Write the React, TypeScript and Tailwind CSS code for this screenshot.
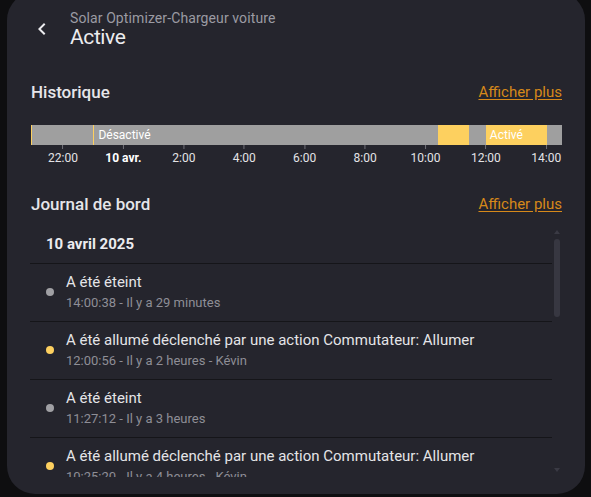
const START = -1.06; // hours relative to 22:00
const END = 16.52;
const SPAN = END - START;

const segments = [
  { from: -1.06, to: -1.02, on: true },
  { from: -1.02, to: 1.0, on: false },
  { from: 1.0, to: 1.04, on: true },
  { from: 1.04, to: 12.42, on: false, label: "Désactivé" },
  { from: 12.42, to: 13.45, on: true },
  { from: 13.45, to: 14.0, on: false },
  { from: 14.0, to: 16.01, on: true, label: "Activé" },
  { from: 16.01, to: 16.52, on: false },
];

const ticks = [
  { h: 0, label: "22:00" },
  { h: 2, label: "10 avr.", bold: true },
  { h: 4, label: "2:00" },
  { h: 6, label: "4:00" },
  { h: 8, label: "6:00" },
  { h: 10, label: "8:00" },
  { h: 12, label: "10:00" },
  { h: 14, label: "12:00" },
  { h: 16, label: "14:00" },
];

const OFF = "A été éteint";
const ON = "A été allumé déclenché par une action Commutateur: Allumer";

const entries = [
  { on: false, title: OFF, sub: "14:00:38 - Il y a 29 minutes" },
  { on: true, title: ON, sub: "12:00:56 - Il y a 2 heures - Kévin" },
  { on: false, title: OFF, sub: "11:27:12 - Il y a 3 heures" },
  { on: true, title: ON, sub: "10:25:20 - Il y a 4 heures - Kévin" },
  { on: false, title: OFF, sub: "09:12:05 - Il y a 5 heures" },
];

function AfficherPlus() {
  return (
    <a className="text-[15px] leading-6 text-[#d6891a] underline underline-offset-2 cursor-pointer">
      Afficher plus
    </a>
  );
}

function Timeline() {
  return (
    <div>
      <div className="mt-[21px] flex h-5 w-full overflow-hidden">
        {segments.map((s, i) => (
          <div
            key={i}
            className={`flex items-center overflow-hidden whitespace-nowrap text-xs text-white ${
              s.on ? "bg-[#fdd05f]" : "bg-[#9f9f9f]"
            }`}
            style={{ width: `${((s.to - s.from) / SPAN) * 100}%` }}
          >
            {s.label && <span className="pl-1 pb-px">{s.label}</span>}
          </div>
        ))}
      </div>
      <div className="relative h-[21px]">
        {ticks.map((t) => (
          <div
            key={t.label}
            className="absolute top-0 flex -translate-x-1/2 flex-col items-center"
            style={{ left: `${((t.h - START) / SPAN) * 100}%` }}
          >
            <div className="h-1 w-px bg-[#707078]" />
            <span className={`mt-px text-xs leading-4 whitespace-nowrap ${t.bold ? "font-bold text-white" : "text-[#e3e3e6]"}`}>
              {t.label}
            </span>
          </div>
        ))}
      </div>
    </div>
  );
}

export default function App() {
  return (
    <div className="h-[497px] w-[591px] overflow-hidden bg-[#0e0e10] font-['Roboto',sans-serif]">
      <div className="mx-[7px] -mt-2 flex h-[502px] w-[578px] flex-col rounded-[28px] bg-[#25252d]">
        {/* Header */}
        <div className="flex items-center gap-4 pl-[23px] pt-[18px]">
          <svg viewBox="0 0 24 24" className="h-6 w-6 fill-[#ececef]">
            <path d="M15.41,16.58L10.83,12L15.41,7.41L14,6L8,12L14,18L15.41,16.58Z" />
          </svg>
          <div className="flex flex-col">
            <span className="text-sm leading-4 tracking-[0.1px] text-[#9b9ba3]">Solar Optimizer-Chargeur voiture</span>
            <span className="text-[21px] leading-[22px] tracking-[-0.4px] text-[#ececef]">Active</span>
          </div>
        </div>

        <div className="flex flex-col pl-6 pr-[23px]">
          {/* Historique */}
          <div className="mt-8 flex h-6 items-center justify-between">
            <h3 className="text-[17px] leading-6 font-medium text-[#e6e6e9]">Historique</h3>
            <AfficherPlus />
          </div>
          <Timeline />

          {/* Journal de bord */}
          <div className="mt-[26px] flex h-6 items-center justify-between">
            <h3 className="text-[17px] leading-6 font-medium text-[#e6e6e9]">Journal de bord</h3>
            <AfficherPlus />
          </div>

          <div className="-ml-px mt-[10px] flex h-[251px]">
            <div className="flex-1 overflow-hidden">
              <div className="border-b border-[#151519] pb-[9px] pl-4 pt-2 text-[15px] leading-5 font-bold text-[#ececef]">
                10 avril 2025
              </div>
              {entries.map((e, i) => (
                <div key={i} className="flex items-center gap-3 border-b border-[#151519] pb-[10px] pl-4 pt-2">
                  <div className={`h-2 w-2 shrink-0 rounded-full ${e.on ? "bg-[#fdd05f]" : "bg-[#a0a0a4]"}`} />
                  <div className="flex flex-col">
                    <span className="text-[15px] leading-5 text-[#e4e4e7]">{e.title}</span>
                    <span className="mt-[3px] text-[13px] leading-4 text-[#8e8e96]">{e.sub}</span>
                  </div>
                </div>
              ))}
            </div>

            {/* scrollbar */}
            <div className="flex w-[10px] flex-col items-center">
              <div className="mt-1 h-0 w-0 border-x-[3px] border-b-[4px] border-x-transparent border-b-[#3a3a44]" />
              <div className="mt-[5px] h-[78px] w-[6px] rounded-full bg-[#373741]" />
              <div className="flex-1" />
              <div className="mb-[5px] h-0 w-0 border-x-[3px] border-t-[4px] border-x-transparent border-t-[#3a3a44]" />
            </div>
          </div>
        </div>
      </div>
    </div>
  );
}
